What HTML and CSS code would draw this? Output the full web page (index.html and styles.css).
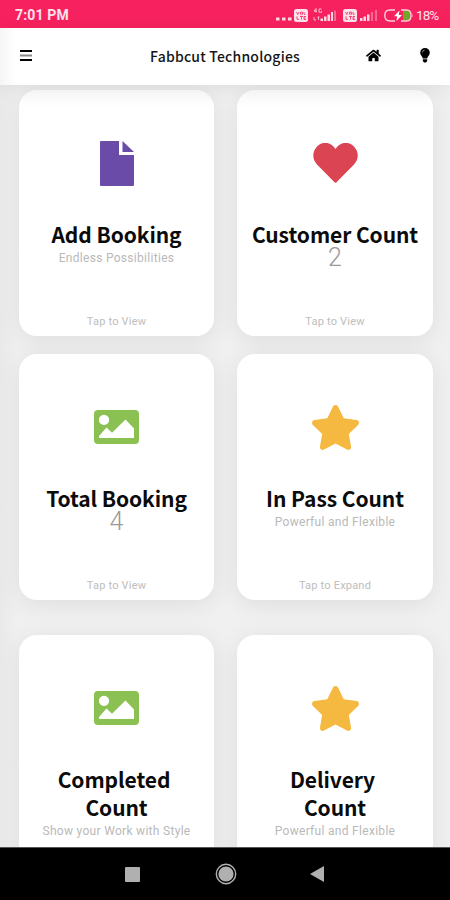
FILE: index.html
```html
<!DOCTYPE html>
<html lang="en">
<head>
<meta charset="utf-8">
<title>Fabbcut Technologies</title>
<link rel="stylesheet" href="styles.css">
</head>
<body>
<svg class="defs" width="0" height="0">
  <symbol id="image" viewBox="0 0 45 34"><path fill-rule="evenodd" d="M4 0H41Q45 0 45 4V30Q45 34 41 34H4Q0 34 0 30V4Q0 0 4 0ZM10 4.800a5.100 5.100 0 1 0 .01 0ZM5 27.500V26L12.500 17.500L18 22.800L31.500 9.500L40 18.500V28H5.500Z"/></symbol>
  <symbol id="star" viewBox="20 0 536 512"><path d="M259.3 17.8L194 150.2 47.9 171.5c-26.2 3.8-36.7 36.1-17.7 54.6l105.7 103-25 145.5c-4.5 26.300 23.200 46 46.400 33.700L288 439.600l130.700 68.700c23.200 12.200 50.900-7.400 46.400-33.700l-25-145.500 105.700-103c19-18.500 8.500-50.800-17.700-54.600L382 150.200 316.700 17.800c-11.700-23.600-45.600-23.900-57.400 0z"/></symbol>
  <symbol id="volte" viewBox="0 0 14 13"><rect width="14" height="13" rx="2.500" fill="#ffe3ec"/><path d="M2.500 3l1.300 2.500L5 3M6.500 3.200h2v2h-2zM10 3v2.300h1.500M3 7.300v3h2M6 7.500h3M7.500 7.500v3M12 7.500h-2v3h2M10 9h1.500" fill="none" stroke="#f8366f" stroke-width=".9"/></symbol>
</svg>
<div class="status">
  <span class="time">7:01 PM</span>
  <div class="signals">
    <svg class="dots" width="16" height="4" viewBox="0 0 16 4"><path d="M0 .5h3.500v3H0zM6 .5h3.500v3H6zM12 .5h3.500v3H12z"/></svg>
    <svg class="volte" width="14" height="13"><use href="#volte"/></svg>
    <svg class="bars" width="23" height="14" viewBox="0 0 23 14"><path d="M3 .5L1 3.200h3M3 .5v4M8.500 1H6v3.300h2.500V2.800M1 9v3h2M4.500 9h2M5.500 9v3" fill="none" stroke="#ffc7d8" stroke-width=".9"/><path d="M7.500 10.500h2.500V13H7.500zM11 8.500h2.500V13H11zM14.500 6.500H17V13h-2.500zM18 4h2v9h-2z"/><path opacity=".4" d="M21 2.500h2V13h-2z"/></svg>
    <svg class="volte second" width="14" height="13"><use href="#volte"/></svg>
    <svg class="bars weak" width="17" height="11" viewBox="0 0 17 11"><path d="M0 8h2.500v3H0zM3.500 6.500H6V11H3.500zM7 4.500h2.500V11H7z"/><path opacity=".4" d="M11 2h2v9h-2zM15 0h2v11h-2z"/></svg>
    <svg class="battery" width="29" height="13" viewBox="0 0 29 13"><path d="M19 1.500h3.500Q26 1.500 26 6.500T22.500 11.500H19z" fill="#72a629"/><path d="M11 1H6Q.8 1 .8 6.500T6 12h5M17 1h5.500Q27 1 27 6.500T22.500 12H17" fill="none" stroke="#ffd0dd" stroke-width="1.400"/><path d="M28 4.500q1 2 0 4z" fill="#ffd0dd"/><path d="M15.500 1.500L10 7.300h3.200L12.500 12 18 5.900h-3.200z" fill="#fff"/></svg>
    <span class="percent">18%</span>
  </div>
</div>
<header class="header">
  <svg class="menu" width="12" height="11" viewBox="0 0 12 11"><path d="M0 0h12v2H0zM0 9h12v2H0z"/><path fill="#888" d="M0 4.500h12v2H0z"/></svg>
  <h1>Fabbcut Technologies</h1>
  <div class="actions">
    <svg width="15" height="13" viewBox="0 32 576 448"><path d="M280.370 148.260L96 300.110V464a16 16 0 0 0 16 16l112.060-.290a16 16 0 0 0 15.920-16V368a16 16 0 0 1 16-16h64a16 16 0 0 1 16 16v95.640a16 16 0 0 0 16 16.050L464 480a16 16 0 0 0 16-16V300L295.670 148.260a12.190 12.190 0 0 0-15.300 0zM571.600 251.470L488 182.560V44.050a12 12 0 0 0-12-12h-56a12 12 0 0 0-12 12v72.610L318.470 43a48 48 0 0 0-61 0L4.340 251.470a12 12 0 0 0-1.600 16.900l25.500 31A12 12 0 0 0 45.150 301l235.220-193.740a12.190 12.190 0 0 1 15.300 0L530.900 301a12 12 0 0 0 16.900-1.600l25.500-31a12 12 0 0 0-1.700-16.930z"/></svg>
    <svg width="10" height="15" viewBox="0 0 10 15"><path d="M5 0A4.800 4.800 0 0 1 9.800 4.700C9.800 7.300 7.500 8.200 7.200 10.500H2.800C2.500 8.200.2 7.300.2 4.700A4.800 4.800 0 0 1 5 0ZM2.800 11.200H7.200V13L6 14.500H4L2.800 13Z"/><path d="M2.300 4.500Q2.500 2.300 4.700 2" fill="none" stroke="#aaa" stroke-width=".8"/></svg>
  </div>
</header>
<main class="content">
  <div class="grid">
    <section class="card shaded">
      <div class="icon purple"><svg width="34" height="45" viewBox="0 0 34 45"><path d="M1 0H19V14H34V44Q34 45 33 45H1Q0 45 0 44V1Q0 0 1 0ZM22.500 0L34 11H22.500Z"/></svg></div>
      <h2>Add Booking</h2><p>Endless Possibilities</p><small>Tap to View</small>
    </section>
    <section class="card shaded">
      <div class="icon red"><svg width="45" height="40" viewBox="0 0 45 40"><path d="M22.500 6C27-1.500 36-2 41 3.500C46 9 46 16 41 21.500L24 38.800Q22.500 40.500 21 38.800L4 21.500C-1 16-1 9 4 3.500C9-2 18-1.500 22.500 6Z"/></svg></div>
      <h2>Customer Count</h2><p class="number">2</p><small>Tap to View</small>
    </section>
    <section class="card">
      <div class="icon green"><svg width="45" height="34"><use href="#image"/></svg></div>
      <h2>Total Booking</h2><p class="number">4</p><small>Tap to View</small>
    </section>
    <section class="card">
      <div class="icon yellow"><svg width="47" height="45"><use href="#star"/></svg></div>
      <h2>In Pass Count</h2><p>Powerful and Flexible</p><small>Tap to Expand</small>
    </section>
  </div>
  <div class="grid">
    <section class="card">
      <div class="icon green"><svg width="45" height="34"><use href="#image"/></svg></div>
      <h2><span class="lead">Completed</span><br>Count</h2><p>Show your Work with Style</p>
    </section>
    <section class="card">
      <div class="icon yellow"><svg width="47" height="45"><use href="#star"/></svg></div>
      <h2><span class="lead">Delivery</span><br>Count</h2><p>Powerful and Flexible</p>
    </section>
  </div>
</main>
<nav class="nav">
  <svg width="15" height="15"><rect width="15" height="15" rx="1" fill="#b0b0b0"/></svg>
  <svg width="22" height="22"><circle cx="11" cy="11" r="9.700" fill="none" stroke="#b0b0b0" stroke-width="1.400"/><circle cx="11" cy="11" r="7.600" fill="#b0b0b0"/></svg>
  <svg width="14" height="16"><path d="M14 0V16L0 8Z" fill="#b0b0b0"/></svg>
</nav>
</body>
</html>
```
FILE: styles.css
```css
* { box-sizing: border-box; }
body {
  margin: 0;
  width: 450px;
  height: 900px;
  overflow: hidden;
  display: flex;
  flex-direction: column;
  background: #f0f0f0;
  font-family: Roboto, sans-serif;
}
h1, h2, p { margin: 0; }
svg { display: block; flex: none; }
.defs { position: absolute; }

.status {
  flex: none;
  height: 28px;
  padding: 2px 11px 0 15px;
  display: flex;
  align-items: center;
  justify-content: space-between;
  background: #f7215f;
  color: #ffe3ec;
}
.time { font-size: 14px; font-weight: 700; letter-spacing: .15px; }
.signals { display: flex; align-items: center; fill: #ffd9e4; }
.dots { margin: 7px 2px 0 0; }
.bars { margin: -1px 7px 0 5px; }
.weak { margin: 1px 7px 0 3px; }
.battery { margin-right: 3px; }
.percent { font-size: 13.500px; letter-spacing: -.9px; width: 23px; }

.header {
  flex: none;
  height: 57px;
  padding: 0 20px;
  display: grid;
  grid-template-columns: 1fr auto 1fr;
  align-items: center;
  background: linear-gradient(90deg, #f5f5f5, #fff 16px);
  z-index: 2;
  box-shadow: 0 3px 20px rgba(0, 0, 0, .08);
}
.menu { margin-top: -3px; }
.header h1 {
  font: 500 14px/20px "Noto Sans CJK JP", sans-serif;
  letter-spacing: .2px;
  margin-top: -2px;
  color: #151515;
}
.actions {
  display: flex;
  gap: 38px;
  justify-content: flex-end;
  align-items: center;
  margin: -3px 0 0;
}
.actions svg:first-child { margin-right: 1px; }

.content {
  flex: 1;
  min-height: 0;
  overflow: hidden;
  padding: 5px 17px 0 19px;
  background: linear-gradient(90deg, #e9e9e9, #f0f0f0 18px);
}
.grid {
  display: grid;
  grid-template-columns: 195px 196px;
  grid-auto-rows: 246px;
  gap: 18px 23px;
  margin-bottom: 35px;
}
.card {
  display: flex;
  flex-direction: column;
  align-items: center;
  padding-bottom: 7px;
  border-radius: 18px;
  background: #fff;
  box-shadow: 0 4px 24px rgba(0, 0, 0, .08);
  text-align: center;
}
.shaded { background: linear-gradient(#fbfbfb, #fff 20px); }
.icon { height: 130px; padding-top: 16px; display: flex; align-items: center; }
.purple { fill: #6b4ba8; }
.red { fill: #db4453; }
.green { fill: #8bc152; }
.yellow { fill: #f5b942; }
.card h2 {
  font: 700 21px/28px "Noto Sans CJK JP", sans-serif;
  letter-spacing: -.08px;
  color: #0b0b0b;
  white-space: nowrap;
}
.lead { margin-right: 5px; }
.card p { margin-top: 2px; font-size: 12px; line-height: 16px; letter-spacing: .3px; color: #b9b9b9; }
.card .number { font-size: 25px; font-weight: 300; line-height: 16px; color: #9a9a9a; }
.card small { margin-top: auto; font-size: 11px; line-height: 14px; letter-spacing: .2px; color: #bdbdbd; }

.nav {
  flex: none;
  height: 53px;
  display: grid;
  grid-template-columns: 15px 22px 14px;
  align-items: center;
  justify-content: center;
  gap: 75px;
  padding-left: 1px;
  border-top: 1px solid #555;
  background: #000;
  z-index: 2;
}
.nav svg:last-child { margin-left: -2px; }
```
